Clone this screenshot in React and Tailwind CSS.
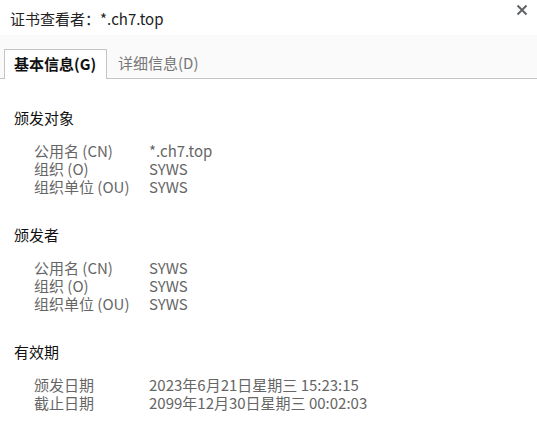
import React from 'react';

const font = { fontFamily: '"Noto Sans CJK SC", "Noto Sans", sans-serif' };

const sections = [
  {
    title: '颁发对象',
    rows: [
      ['公用名 (CN)', '*.ch7.top'],
      ['组织 (O)', 'SYWS'],
      ['组织单位 (OU)', 'SYWS'],
    ],
  },
  {
    title: '颁发者',
    rows: [
      ['公用名 (CN)', 'SYWS'],
      ['组织 (O)', 'SYWS'],
      ['组织单位 (OU)', 'SYWS'],
    ],
  },
  {
    title: '有效期',
    rows: [
      ['颁发日期', '2023年6月21日星期三 15:23:15'],
      ['截止日期', '2099年12月30日星期三 00:02:03'],
    ],
  },
];

export default function App() {
  return (
    <div className="w-[537px] h-[430px] bg-white overflow-hidden text-[15px]" style={font}>
      <div className="h-[35px] flex justify-between pl-[10px] pr-[9px]">
        <span className="pt-[8px] leading-[22px] text-[#222]">证书查看者：*.ch7.top</span>
        <svg width="12" height="12" viewBox="0 0 12 12" className="mt-[4px]">
          <path d="M1.5 1.5 L10.5 10.5 M10.5 1.5 L1.5 10.5" stroke="#5f6368" strokeWidth="2" />
        </svg>
      </div>
      <div className="h-[44px] bg-[#fafafa] border-b border-[#c4c4c4] flex items-end pl-[4px]">
        <div className="h-[30px] w-[103px] bg-white border border-b-0 border-[#c4c4c4] -mb-px flex items-center pl-[9px] font-bold text-[#111]">
          基本信息(G)
        </div>
        <div className="h-[30px] flex items-center pl-[11px] text-[#777]">详细信息(D)</div>
      </div>
      <div className="pl-[14px] pt-[28px]">
        {sections.map((s) => (
          <div key={s.title} className="mb-[28px]">
            <div className="text-[#111] leading-[22px] mb-[13px]">{s.title}</div>
            <div className="pl-[20px]">
              {s.rows.map(([k, v]) => (
                <div key={k} className="flex leading-[18px] text-[#666]">
                  <div className="w-[115px]">{k}</div>
                  <div>{v}</div>
                </div>
              ))}
            </div>
          </div>
        ))}
      </div>
    </div>
  );
}
